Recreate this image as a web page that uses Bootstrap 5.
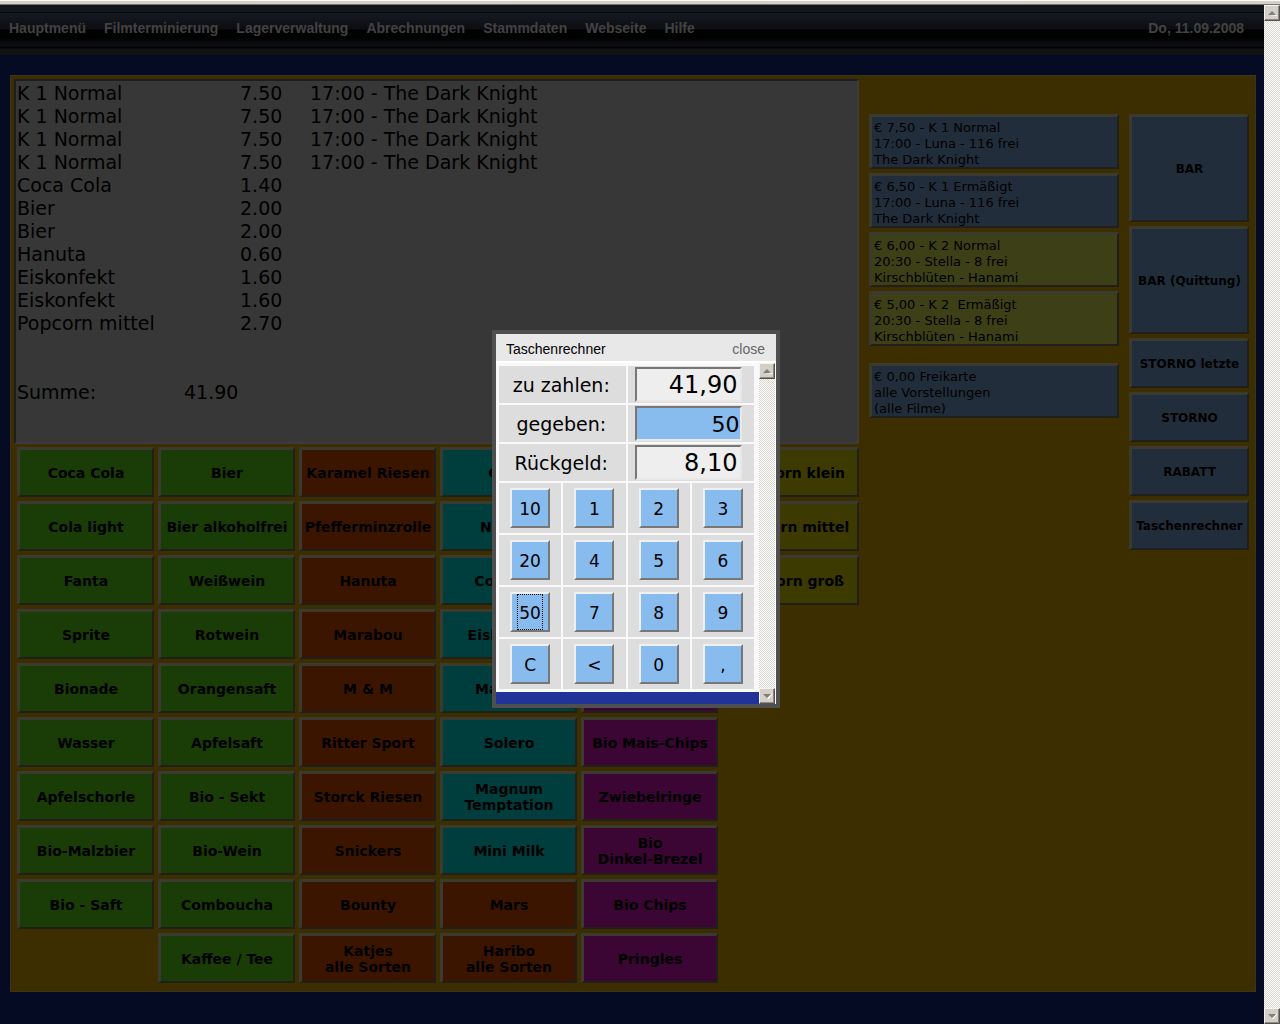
<!DOCTYPE html>
<html lang="de">
<head>
<meta charset="utf-8">
<meta name="viewport" content="width=device-width, initial-scale=1">
<title>Kasse – Taschenrechner</title>
<link href="https://cdn.jsdelivr.net/npm/bootstrap@5.3.0/dist/css/bootstrap.min.css" rel="stylesheet">
<style>
  body { background:#060b24; color:#000; font-family:"DejaVu Sans", Verdana, sans-serif; line-height:16px; font-size:14px; }
  button { color:#000; font-family:inherit; }
  .window-edge { height:5px; background:linear-gradient(#fbfbf8 0 1px, #d4d0c8 1px 4px, #77756f 4px); }
  .frame { min-height:calc(100vh - 5px); }

  .topmenu { height:50px; padding:0 20px 5px 9px; font:bold 14px/16px "Liberation Sans", Arial, sans-serif;
    background:linear-gradient(#111417 0, #14171c 7px, #05060c 7px, #05060c 8px, #161a22 8px, #0c0d11 24px, #010102 25px, #010102 33px, #0e1013 41px, #020203 42px, #020203 43px, #111315 44px, #101214 50px); }
  .topmenu ul { gap:18px; }
  .topmenu a, .topmenu time { color:#424242; text-decoration:none; }

  .register { margin:20px 8px 32px 10px; padding:3px 6px 8px 3px; background:#3d2e00; border:1px solid #3a3420; gap:10px; }
  .receipt { height:365px; background:#373737; border:2px solid; border-color:#1e1e1c #3c3a3c #3c3a3c #1e1e1c; font-size:19px; line-height:23px; padding:1px 0 0 1px; }
  .receipt td { padding:0; }
  .receipt .c-name { width:223px; }
  .receipt .c-price { width:70px; }
  .receipt .total { margin-top:46px; }
  .receipt .total span { width:167px; }

  .articles { display:grid; grid-auto-flow:column; grid-template:repeat(10, 50px) / repeat(6, minmax(0, 1fr)); gap:4px; padding:3px 0 0 3px; }
  .key { border:3px solid; border-color:#3b3a30 #211f1b #211f1b #3b3a30; border-width:3px 2px 2px 3px; padding:0; font-weight:bold; line-height:16px; white-space:nowrap; }
  .drink { background:#1a3c06; }
  .sweet { background:#3c1500; }
  .ice { background:#003d3d; }
  .chips { background:#3b0534; }
  .popcorn { background:#3c3a00; }

  .tickets { width:250px; padding-top:35px; gap:4px; }
  .ticket { height:55px; padding:3px 0 0 2px; text-align:left; font-size:13px; font-weight:normal; overflow:hidden; white-space:pre-line; }
  .ticket.free { margin-top:13px; }
  .blue { background:#222d3b; }
  .olive { background:#3d3f16; }
  .actions { width:120px; padding-top:35px; gap:4px; }
  .actions .key { height:50px; padding-top:1px; font-size:12px; }
  .actions .tall { height:108px; }

  .calc { position:absolute; top:325px; left:calc(50% - 140px); width:288px; border:4px solid #4f4f4f; background:#fff; }
  .calc header { height:29px; padding:2px 11px 0 10px; background:#e8e8e8; border-bottom:2px solid #fff; font:14px/16px "Liberation Sans", Arial, sans-serif; }
  .calc header button { color:#666; background:none; border:0; padding:0; }
  .calc-main { background:#213399; padding-bottom:12px; }
  .pad { display:grid; grid-template:repeat(3, 37px) repeat(4, 50px) / repeat(4, minmax(0, 1fr)); gap:2px; padding:3px 5px 3px 3px; background:#f9f9f9; }
  .pad > * { background:#ddd; }
  .pad > .wide { grid-column:span 2; }
  .pad label { font-size:19px; line-height:23px; padding:2px 2px 0 0; }
  .field { padding-left:7px; }
  .field input { width:107px; height:35px; padding:1px 2px 0 0; text-align:right; font-size:24px; line-height:28px; background:#eee; color:#000; border:2px solid; border-color:#777 #e8e8e8 #e8e8e8 #777; border-radius:0; outline:0; }
  .field input.given { font-size:22px; background:#88bbee; padding:1px 0 0; }
  .num { width:40px; height:40px; padding:2px 0 0; font-size:17px; line-height:20px; background:#88bbee; border:2px solid; border-color:#eef0f2 #777 #777 #eef0f2; }
  .num.chosen { padding:0; }
  .num.chosen span { display:block; margin:0 6px; padding:8px 0 6px; outline:1px dotted #000; }

  .scroll { width:16px; background:repeating-conic-gradient(#fff 0 25%, #d8d5ce 0 50%) 0 0 / 2px 2px; }
  .calc .scroll { width:17px; border-right:1px solid #fff; }
  .scroll button { width:16px; height:16px; padding:0; background:#d4d0c8; border:1px solid; border-color:#f4f3ef #55534f #55534f #f4f3ef; box-shadow:inset -1px -1px #8c8982; }
  .scroll svg { display:block; margin:auto; }
</style>
<script src="https://cdn.jsdelivr.net/npm/bootstrap@5.3.0/dist/js/bootstrap.bundle.min.js"></script>
</head>
<body>
<div class="window-edge"></div>
<div class="frame d-flex">
  <div class="flex-grow-1 position-relative">
    <nav class="topmenu d-flex align-items-center justify-content-between">
      <ul class="list-unstyled d-flex mb-0">
        <li><a href="#">Hauptmenü</a></li>
        <li><a href="#">Filmterminierung</a></li>
        <li><a href="#">Lagerverwaltung</a></li>
        <li><a href="#">Abrechnungen</a></li>
        <li><a href="#">Stammdaten</a></li>
        <li><a href="#">Webseite</a></li>
        <li><a href="#">Hilfe</a></li>
      </ul>
      <time datetime="2008-09-11">Do, 11.09.2008</time>
    </nav>

    <main class="register d-flex">
      <div class="flex-grow-1">
        <section class="receipt">
          <table>
            <tbody>
              <tr><td class="c-name">K 1 Normal</td><td class="c-price">7.50</td><td>17:00 - The Dark Knight</td></tr>
              <tr><td>K 1 Normal</td><td>7.50</td><td>17:00 - The Dark Knight</td></tr>
              <tr><td>K 1 Normal</td><td>7.50</td><td>17:00 - The Dark Knight</td></tr>
              <tr><td>K 1 Normal</td><td>7.50</td><td>17:00 - The Dark Knight</td></tr>
              <tr><td>Coca Cola</td><td>1.40</td><td></td></tr>
              <tr><td>Bier</td><td>2.00</td><td></td></tr>
              <tr><td>Bier</td><td>2.00</td><td></td></tr>
              <tr><td>Hanuta</td><td>0.60</td><td></td></tr>
              <tr><td>Eiskonfekt</td><td>1.60</td><td></td></tr>
              <tr><td>Eiskonfekt</td><td>1.60</td><td></td></tr>
              <tr><td>Popcorn mittel</td><td>2.70</td><td></td></tr>
            </tbody>
          </table>
          <div class="total d-flex"><span>Summe:</span>41.90</div>
        </section>

        <section class="articles">
          <button class="key drink">Coca Cola</button>
          <button class="key drink">Cola light</button>
          <button class="key drink">Fanta</button>
          <button class="key drink">Sprite</button>
          <button class="key drink">Bionade</button>
          <button class="key drink">Wasser</button>
          <button class="key drink">Apfelschorle</button>
          <button class="key drink">Bio-Malzbier</button>
          <button class="key drink">Bio - Saft</button>
          <div></div>
          <button class="key drink">Bier</button>
          <button class="key drink">Bier alkoholfrei</button>
          <button class="key drink">Weißwein</button>
          <button class="key drink">Rotwein</button>
          <button class="key drink">Orangensaft</button>
          <button class="key drink">Apfelsaft</button>
          <button class="key drink">Bio - Sekt</button>
          <button class="key drink">Bio-Wein</button>
          <button class="key drink">Comboucha</button>
          <button class="key drink">Kaffee / Tee</button>
          <button class="key sweet">Karamel Riesen</button>
          <button class="key sweet">Pfefferminzrolle</button>
          <button class="key sweet">Hanuta</button>
          <button class="key sweet">Marabou</button>
          <button class="key sweet">M &amp; M</button>
          <button class="key sweet">Ritter Sport</button>
          <button class="key sweet">Storck Riesen</button>
          <button class="key sweet">Snickers</button>
          <button class="key sweet">Bounty</button>
          <button class="key sweet">Katjes<br>alle Sorten</button>
          <button class="key ice">Capri</button>
          <button class="key ice">Nogger</button>
          <button class="key ice">Cornetto</button>
          <button class="key ice">Eiskonfekt</button>
          <button class="key ice">Magnum</button>
          <button class="key ice">Solero</button>
          <button class="key ice">Magnum<br>Temptation</button>
          <button class="key ice">Mini Milk</button>
          <button class="key sweet">Mars</button>
          <button class="key sweet">Haribo<br>alle Sorten</button>
          <div></div>
          <div></div>
          <div></div>
          <div></div>
          <button class="key chips">Chips</button>
          <button class="key chips">Bio Mais-Chips</button>
          <button class="key chips">Zwiebelringe</button>
          <button class="key chips">Bio<br>Dinkel-Brezel</button>
          <button class="key chips">Bio Chips</button>
          <button class="key chips">Pringles</button>
          <button class="key popcorn">Popcorn klein</button>
          <button class="key popcorn">Popcorn mittel</button>
          <button class="key popcorn">Popcorn groß</button>
        </section>
      </div>

      <section class="tickets d-flex flex-column flex-shrink-0">
        <button class="key ticket blue">€ 7,50 - K 1 Normal<br>17:00 - Luna - 116 frei<br>The Dark Knight</button>
        <button class="key ticket blue">€ 6,50 - K 1 Ermäßigt<br>17:00 - Luna - 116 frei<br>The Dark Knight</button>
        <button class="key ticket olive">€ 6,00 - K 2 Normal<br>20:30 - Stella - 8 frei<br>Kirschblüten - Hanami</button>
        <button class="key ticket olive">€ 5,00 - K 2 &nbsp;Ermäßigt<br>20:30 - Stella - 8 frei<br>Kirschblüten - Hanami</button>
        <button class="key ticket blue free">€ 0,00 Freikarte<br>alle Vorstellungen<br>(alle Filme)</button>
      </section>

      <section class="actions d-flex flex-column flex-shrink-0">
        <button class="key blue tall">BAR</button>
        <button class="key blue tall">BAR (Quittung)</button>
        <button class="key blue">STORNO letzte</button>
        <button class="key blue">STORNO</button>
        <button class="key blue">RABATT</button>
        <button class="key blue">Taschenrechner</button>
      </section>
    </main>

    <div class="calc" role="dialog" aria-labelledby="calc-title">
      <header class="d-flex align-items-center justify-content-between">
        <span id="calc-title">Taschenrechner</span>
        <button>close</button>
      </header>
      <div class="d-flex">
        <div class="calc-main flex-grow-1">
          <div class="pad">
            <label class="wide d-flex align-items-center justify-content-center" for="due">zu zahlen:</label>
            <div class="field wide d-flex align-items-center"><input id="due" type="text" value="41,90" readonly></div>
            <label class="wide d-flex align-items-center justify-content-center" for="given">gegeben:</label>
            <div class="field wide d-flex align-items-center"><input id="given" class="given" type="text" value="50"></div>
            <label class="wide d-flex align-items-center justify-content-center" for="change">Rückgeld:</label>
            <div class="field wide d-flex align-items-center"><input id="change" type="text" value="8,10" readonly></div>
            <div class="d-flex align-items-center justify-content-center"><button class="num">10</button></div>
            <div class="d-flex align-items-center justify-content-center"><button class="num">1</button></div>
            <div class="d-flex align-items-center justify-content-center"><button class="num">2</button></div>
            <div class="d-flex align-items-center justify-content-center"><button class="num">3</button></div>
            <div class="d-flex align-items-center justify-content-center"><button class="num">20</button></div>
            <div class="d-flex align-items-center justify-content-center"><button class="num">4</button></div>
            <div class="d-flex align-items-center justify-content-center"><button class="num">5</button></div>
            <div class="d-flex align-items-center justify-content-center"><button class="num">6</button></div>
            <div class="d-flex align-items-center justify-content-center"><button class="num chosen"><span>50</span></button></div>
            <div class="d-flex align-items-center justify-content-center"><button class="num">7</button></div>
            <div class="d-flex align-items-center justify-content-center"><button class="num">8</button></div>
            <div class="d-flex align-items-center justify-content-center"><button class="num">9</button></div>
            <div class="d-flex align-items-center justify-content-center"><button class="num">C</button></div>
            <div class="d-flex align-items-center justify-content-center"><button class="num">&lt;</button></div>
            <div class="d-flex align-items-center justify-content-center"><button class="num">0</button></div>
            <div class="d-flex align-items-center justify-content-center"><button class="num">,</button></div>
          </div>
        </div>
        <div class="scroll d-flex flex-column justify-content-between flex-shrink-0">
          <button aria-label="Nach oben"><svg width="9" height="6" viewBox="0 0 9 6"><path d="M2 6h7V5z" fill="#fff"/><path d="M4 1L0 5h8z" fill="#808080"/></svg></button>
          <button aria-label="Nach unten"><svg width="9" height="6" viewBox="0 0 9 6"><path d="M9 1L5 6V5z" fill="#fff" stroke="#fff"/><path d="M0 1h8L4 5z" fill="#808080"/></svg></button>
        </div>
      </div>
    </div>
  </div>

  <div class="scroll d-flex flex-column justify-content-between flex-shrink-0">
    <button aria-label="Seite nach oben"><svg width="9" height="6" viewBox="0 0 9 6"><path d="M2 6h7V5z" fill="#fff"/><path d="M4 1L0 5h8z" fill="#808080"/></svg></button>
    <button aria-label="Seite nach unten"><svg width="9" height="6" viewBox="0 0 9 6"><path d="M9 1L5 6V5z" fill="#fff" stroke="#fff"/><path d="M0 1h8L4 5z" fill="#808080"/></svg></button>
  </div>
</div>
</body>
</html>
